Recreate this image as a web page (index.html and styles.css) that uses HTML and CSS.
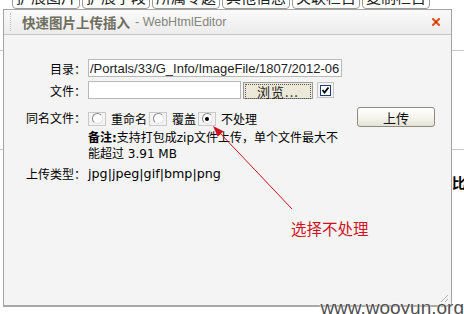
FILE: index.html
```html
<!DOCTYPE html>
<html lang="zh-CN">
<head>
    <meta charset="UTF-8">
    <title>快速图片上传插入</title>
    <link rel="stylesheet" href="styles.css">
</head>
<body>
    <div class="page">
        <ul class="tabs">
            <li>扩展图片</li>
            <li>扩展字段</li>
            <li>所属专题</li>
            <li>其他信息</li>
            <li>关联栏目</li>
            <li>复制栏目</li>
        </ul>
        <div class="page-row row-a"></div>
        <div class="page-row row-b"></div>
        <div class="page-row row-c"><b>比元</b></div>
    </div>

    <div class="dialog">
        <div class="dialog-title">
            <span class="handle"></span>
            <b class="title-main">快速图片上传插入</b>
            <span class="title-sub">- WebHtmlEditor</span>
            <svg class="close" width="8" height="8" viewBox="0 0 8 8">
                <path d="M1 1 L7 7 M7 1 L1 7" stroke="#e4521b" stroke-width="2.2" stroke-linecap="square"/>
                <path d="M3 3 L5 5 M5 3 L3 5" stroke="#b8320c" stroke-width="1"/>
            </svg>
        </div>
        <form class="dialog-body">
            <div class="field field-dir">
                <label class="label">目录：</label>
                <input class="text dir" type="text" value="/Portals/33/G_Info/ImageFile/1807/2012-06">
            </div>
            <div class="field field-file">
                <label class="label">文件：</label>
                <input class="text file" type="text">
                <button type="button" class="browse"><span>浏览...</span></button>
                <span class="check-frame">
                    <span class="check">
                        <svg width="9" height="9" viewBox="0 0 9 9"><path d="M1.5 4 L3.5 6.5 L7.5 1.5" fill="none" stroke="#000" stroke-width="1.8"/></svg>
                    </span>
                </span>
            </div>
            <div class="field field-same">
                <label class="label">同名文件：</label>
                <div class="radios">
                    <span class="radio-frame"><span class="radio"></span></span>
                    <span class="radio-text">重命名</span>
                    <span class="radio-frame"><span class="radio"></span></span>
                    <span class="radio-text">覆盖</span>
                    <span class="radio-frame"><span class="radio checked"></span></span>
                    <span class="radio-text">不处理</span>
                </div>
                <button type="button" class="upload">上传</button>
            </div>
            <div class="field field-note">
                <span class="label"></span>
                <p class="note"><b>备注:</b>支持打包成zip文件上传，单个文件最大不能超过 3.91 MB</p>
            </div>
            <div class="field field-types">
                <label class="label">上传类型：</label>
                <span class="types">jpg|jpeg|gif|bmp|png</span>
            </div>
        </form>
        <svg class="grip" width="10" height="10" viewBox="0 0 10 10">
            <path d="M2 9 L9 2 M6 9 L9 6" stroke="#b0b0b0" stroke-width="1"/>
        </svg>
    </div>

    <svg class="arrow" width="464" height="314" viewBox="0 0 464 314">
        <line x1="219" y1="132" x2="292" y2="209" stroke="#d0101a" stroke-width="1"/>
        <polygon points="213,126 217.7,136.8 223.5,131.2" fill="#d0101a"/>
    </svg>
    <div class="callout">选择不处理</div>
    <div class="watermark">www.wooyun.org</div>
</body>
</html>
```

FILE: styles.css
```css
body {
    margin: 0;
    width: 464px;
    height: 314px;
    overflow: hidden;
    position: relative;
    background: #fff;
    font-family: "DejaVu Sans", "Noto Sans CJK SC", sans-serif;
    font-size: 12px;
    color: #000;
}

/* page behind the dialog */
.page { height: 314px; overflow: hidden; }
.tabs {
    display: flex;
    gap: 2px;
    margin: -11px 0 0 12px;
    padding: 0;
    list-style: none;
    height: 20px;
}
.tabs li {
    width: 66px;
    height: 18px;
    border: 1px solid #9a9a9a;
    border-radius: 4px;
    font-family: "Noto Sans CJK SC", sans-serif;
    font-size: 15px;
    line-height: 13px;
    text-align: center;
    color: #222;
    background: #fff;
}
.page-row { border-bottom: 1px solid #c8c8c8; }
.row-a { height: 41px; }
.row-b { height: 98px; }
.row-c {
    padding: 22px 0 0 452px;
    white-space: nowrap;
    font-family: "Noto Sans CJK SC", sans-serif;
    font-size: 14px;
    border-bottom: none;
}

/* dialog */
.dialog {
    position: absolute;
    left: 3px;
    top: 9px;
    width: 449px;
    height: 298px;
    box-sizing: border-box;
    border: 1px solid #a4a4a4;
    border-bottom: 2px solid #a8a8a8;
    background: #f4f4f4;
}
.dialog-title {
    display: flex;
    align-items: center;
    height: 24px;
    border-bottom: 1px solid #c6c6c6;
    background: linear-gradient(#fafafa, #ececec);
}
.handle {
    width: 0;
    height: 18px;
    margin: 0 11px 0 6px;
    border-left: 1px dotted #c0c0c0;
}
.title-main {
    font-family: "Noto Sans CJK SC", sans-serif;
    font-size: 13.5px;
    color: #6e6e5e;
    margin-right: 5px;
}
.title-sub {
    font-family: "Liberation Sans", sans-serif;
    font-size: 12.5px;
    color: #85857a;
}
.close { margin: 0 11px 0 auto; }

.dialog-body {
    margin: 0;
    padding: 24px 16px 0 0;
}
.field {
    display: flex;
    align-items: center;
}
.label {
    width: 82px;
    margin-right: 2px;
    text-align: right;
    font-family: "Noto Sans CJK SC", sans-serif;
    flex-shrink: 0;
}
.text {
    box-sizing: border-box;
    height: 18px;
    margin: 0;
    padding: 0 1px;
    border: 1px solid #b9b9b9;
    background: #fff;
    font-family: "Liberation Sans", sans-serif;
    font-size: 13px;
    color: #222;
}
.dir { width: 254px; }
.field-file { margin-top: 4px; }
.file { width: 153px; }
.browse {
    box-sizing: border-box;
    width: 70px;
    height: 17px;
    margin: 0 0 0 2px;
    padding: 1px;
    border: 1px solid #9c9c9c;
    background: #ece9d8;
    font-family: "Noto Sans CJK SC", sans-serif;
    font-size: 13px;
    color: #222;
}
.browse span {
    display: block;
    height: 13px;
    line-height: 13px;
    border: 1px dotted #555;
    letter-spacing: 1px;
}
.check-frame {
    box-sizing: border-box;
    width: 17px;
    height: 16px;
    margin-left: 4px;
    border: 1px solid #c4c4c4;
    display: flex;
    align-items: center;
    justify-content: center;
}
.check {
    box-sizing: border-box;
    width: 11px;
    height: 11px;
    border: 1px solid #1c3f6e;
    background: #fff;
    display: flex;
}

.field-same {
    margin-top: 8px;
    height: 20px;
    justify-content: space-between;
}
.radios {
    display: flex;
    align-items: center;
    margin-top: 3px;
    margin-right: auto;
}
.radio-frame {
    box-sizing: border-box;
    width: 18px;
    height: 14px;
    margin-right: 5px;
    border: 1px solid #c9c9c9;
    display: flex;
    align-items: center;
    justify-content: center;
}
.radio {
    box-sizing: border-box;
    width: 11px;
    height: 11px;
    border-radius: 50%;
    border: 1px solid;
    border-color: #8a8a8a #e0e0e0 #e0e0e0 #8a8a8a;
    background: #fff;
    position: relative;
}
.radio.checked::after {
    content: "";
    position: absolute;
    left: 2.5px;
    top: 2.5px;
    width: 4px;
    height: 4px;
    border-radius: 50%;
    background: #000;
}
.radio-text {
    margin-right: 2px;
    font-family: "Noto Sans CJK SC", sans-serif;
    line-height: 14px;
}
.upload {
    box-sizing: border-box;
    width: 78px;
    height: 20px;
    margin: 0;
    padding: 0;
    border: 1px solid #8b8b80;
    border-radius: 3px;
    background: linear-gradient(#ffffff, #f3f2ea 60%, #e4e2d6);
    font-family: "Noto Sans CJK SC", sans-serif;
    font-size: 13px;
    color: #111;
}

.field-note {
    margin-top: 3px;
    align-items: flex-start;
}
.note {
    width: 256px;
    margin: 0;
    line-height: 16px;
}
.field-types {
    margin-top: 4px;
    line-height: 16px;
}
.types { font-size: 12.7px; }

.grip {
    position: absolute;
    right: 2px;
    bottom: 2px;
}

/* annotations over the screenshot */
.arrow {
    position: absolute;
    left: 0;
    top: 0;
}
.callout {
    position: absolute;
    left: 291px;
    top: 218px;
    font-family: "Noto Sans CJK SC", sans-serif;
    font-size: 15.5px;
    line-height: 20px;
    color: #d3101c;
}
.watermark {
    position: absolute;
    right: 0;
    bottom: -3px;
    font-family: "Liberation Sans", sans-serif;
    font-size: 19px;
    line-height: 19px;
    color: #505050;
    text-shadow: 0 0 2px #fff, 0 0 1px #fff;
}
```
